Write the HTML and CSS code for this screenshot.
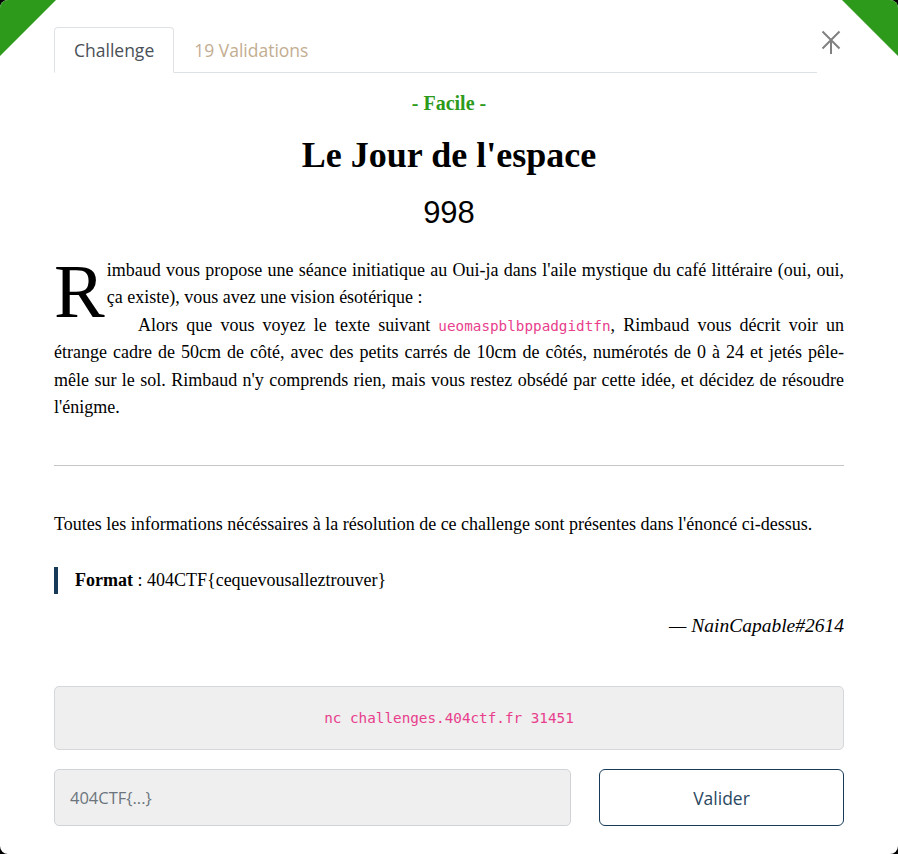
FILE: index.html
```html
<!DOCTYPE html>
<html lang="fr">
<head>
<meta charset="utf-8">
<title>Le Jour de l'espace</title>
<link rel="stylesheet" href="styles.css">
</head>
<body>
<div class="modal">
  <span class="corner corner-left"></span>
  <span class="corner corner-right"></span>
  <div class="header">
    <nav class="tabs">
      <a class="tab active">Challenge</a>
      <a class="tab">19 Validations</a>
    </nav>
    <button class="close" aria-label="Fermer">
      <svg width="20" height="26" viewBox="0 0 20 26">
        <path d="M1.5 1.5 L18.5 18.5 M18.5 1.5 L1.5 18.5 M10 10 L10 24" stroke="#808080" stroke-width="2" fill="none"/>
      </svg>
    </button>
  </div>
  <div class="content">
    <div class="difficulty">- Facile -</div>
    <h2 class="title">Le Jour de l'espace</h2>
    <div class="points">998</div>
    <div class="description">
      <p class="intro"><span class="dropcap">R</span>imbaud vous propose une séance initiatique au Oui-ja dans l'aile mystique du café littéraire (oui, oui, ça existe), vous avez une vision ésotérique :</p>
      <p class="indent">Alors que vous voyez le texte suivant <code class="code">ueomaspblbppadgidtfn</code>, Rimbaud vous décrit voir un étrange cadre de 50cm de côté, avec des petits carrés de 10cm de côtés, numérotés de 0 à 24 et jetés pêle-mêle sur le sol. Rimbaud n'y comprends rien, mais vous restez obsédé par cette idée, et décidez de résoudre l'énigme.</p>
    </div>
    <hr class="sep">
    <p class="info">Toutes les informations nécéssaires à la résolution de ce challenge sont présentes dans l'énoncé ci-dessus.</p>
    <blockquote class="format"><strong>Format</strong> : 404CTF{cequevousalleztrouver}</blockquote>
    <p class="author">— NainCapable#2614</p>
    <div class="conn"><code class="code">nc challenges.404ctf.fr 31451</code></div>
    <form class="flag-form">
      <input class="flag-input" type="text" placeholder="404CTF{...}">
      <button class="submit" type="button">Valider</button>
    </form>
  </div>
</div>
</body>
</html>
```

FILE: styles.css
```css
html, body {
  margin: 0;
  padding: 0;
  background: #000;
}

.modal {
  position: relative;
  width: 898px;
  height: 854px;
  background: #fff;
  border-radius: 8px;
  overflow: hidden;
  box-sizing: border-box;
}

.corner {
  position: absolute;
  top: 0;
  width: 56px;
  height: 56px;
  background: #2e9a1b;
}
.corner-left {
  left: 0;
  clip-path: polygon(0 0, 100% 0, 0 100%);
}
.corner-right {
  right: 0;
  clip-path: polygon(0 0, 100% 0, 100% 100%);
}

.header {
  display: flex;
  align-items: flex-start;
  padding: 27px 54px 0 54px;
}

.tabs {
  flex: 1;
  display: flex;
  border-bottom: 1px solid #dee2e6;
  font-family: "Open Sans", "Noto Sans", sans-serif;
  font-size: 17.5px;
}

.tab {
  display: block;
  padding: 10px 19px 10px 19px;
  line-height: 24px;
  color: #c3ad91;
  border: 1px solid transparent;
  border-top-left-radius: 4px;
  border-top-right-radius: 4px;
  margin-bottom: -1px;
}

.tab.active {
  color: #495057;
  border-color: #dee2e6 #dee2e6 #fff;
  background: #fff;
}

.close {
  width: 27px;
  border: 0;
  padding: 3px 0 0 4px;
  background: none;
  display: flex;
}

.content {
  padding: 0 54px;
  font-family: "Liberation Serif", "Times New Roman", serif;
  color: #000;
}

.difficulty {
  margin-top: 18px;
  text-align: center;
  color: #2e9a1b;
  font-weight: bold;
  font-size: 20px;
  line-height: 24px;
}

.title {
  margin: 20px 0 0 0;
  text-align: center;
  font-size: 36px;
  line-height: 40px;
  font-weight: bold;
}

.points {
  margin-top: 19px;
  text-align: center;
  font-family: "Liberation Sans", Arial, sans-serif;
  font-size: 31px;
  line-height: 38px;
}

.description {
  margin-top: 25px;
  font-size: 18px;
  line-height: 27.4px;
  text-align: justify;
}

.description p {
  margin: 0;
}

.dropcap {
  float: left;
  font-size: 76px;
  line-height: 60px;
  height: 50px;
  padding-top: 4px;
  margin-right: 2px;
}

.indent {
  text-indent: 84px;
}

.code {
  font-family: "DejaVu Sans Mono", "Liberation Mono", monospace;
  font-size: 14.3px;
  line-height: 1;
  color: #e83e8c;
}

.sep {
  margin: 44px 0 0 0;
  border: 0;
  border-top: 1px solid #c6c6c6;
  height: 0;
}

.info {
  margin: 45px 0 0 0;
  font-size: 18px;
  line-height: 27px;
}

.format {
  margin: 29px 0 0 0;
  border-left: 4px solid #163a57;
  padding-left: 17px;
  font-size: 18px;
  line-height: 27px;
}

.author {
  margin: 18px 0 0 0;
  text-align: right;
  font-style: italic;
  font-size: 19.5px;
  line-height: 27px;
}

.conn {
  margin-top: 47px;
  height: 64px;
  box-sizing: border-box;
  border: 1px solid #d4d7db;
  border-radius: 5px;
  background: #efefef;
  display: flex;
  align-items: center;
  justify-content: center;
}

.flag-form {
  margin: 19px 0 0 0;
  display: flex;
  gap: 28px;
}

.flag-input {
  flex: 0 0 517px;
  height: 57px;
  box-sizing: border-box;
  border: 1px solid #d0d3d7;
  border-radius: 5px;
  background: #efefef;
  padding: 0 15px;
  font-family: "Open Sans", "Noto Sans", sans-serif;
  font-size: 16.5px;
  color: #495057;
}

.flag-input::placeholder {
  color: #6c757d;
}

.submit {
  flex: 1;
  height: 57px;
  box-sizing: border-box;
  border: 1px solid #163a57;
  border-radius: 6px;
  background: #fff;
  font-family: "Open Sans", "Noto Sans", sans-serif;
  font-size: 17.5px;
  color: #2b4862;
}
```
